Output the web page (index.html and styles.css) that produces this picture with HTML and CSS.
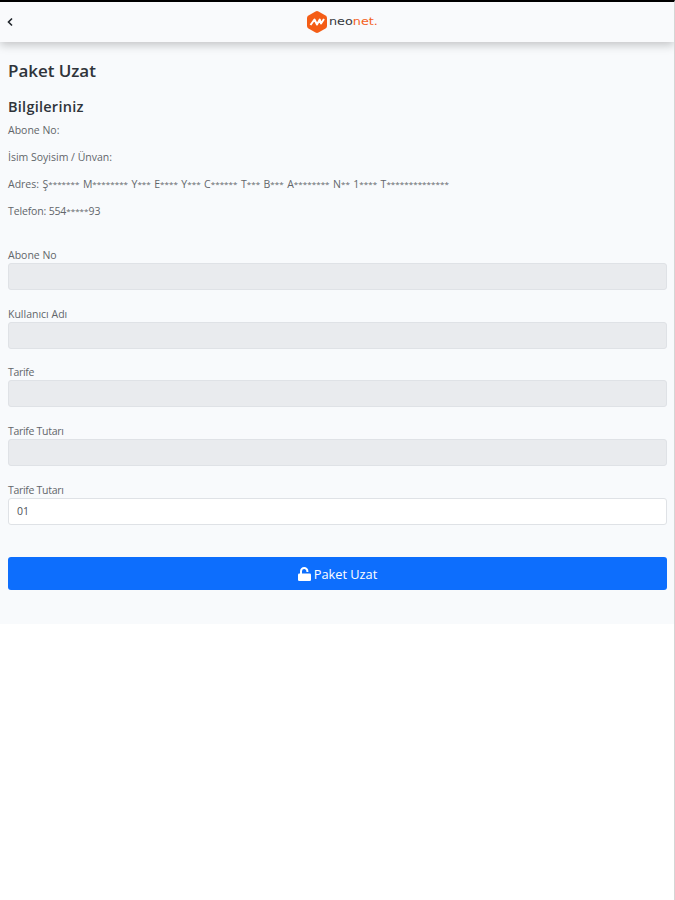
FILE: index.html
```html
<!DOCTYPE html>
<html lang="tr">
<head>
<meta charset="utf-8">
<title>Paket Uzat</title>
<link rel="stylesheet" href="styles.css">
</head>
<body>
<div class="page">
  <header class="topbar">
    <svg class="back" viewBox="0 0 6 10"><path d="M5 1.500 1.500 5 5 8.500"/></svg>
    <div class="brand">
      <svg class="hex" viewBox="0 0 20 22"><path class="hex-bg" d="M8.5.5q1.5-.8 3 0l7 4q1.5.9 1.5 2.6v7.8q0 1.700-1.500 2.600l-7 4q-1.500.8-3 0l-7-4Q0 16.600 0 14.900V7.100Q0 5.400 1.500 4.500z"/><path class="hex-mark" d="M3.500 14 7.500 8.500 10 13.500 12.800 8.500 14 12.500 17 8"/></svg>
      <span class="word">neo<b>net.</b></span>
    </div>
  </header>
  <main>
    <h1>Paket Uzat</h1>
    <h2>Bilgileriniz</h2>
    <p>Abone No:</p>
    <p>İsim Soyisim / Ünvan:</p>
    <p class="address">Adres: Ş<i>*******</i> M<i>********</i> Y<i>***</i> E<i>****</i> Y<i>***</i> C<i>******</i> T<i>***</i> B<i>***</i> A<i>********</i> N<i>**</i> 1<i>****</i> T<i>**************</i></p>
    <p class="phone">Telefon: 554<i>*****</i>93</p>
    <form>
      <div class="field"><label>Abone No</label><div class="control"></div></div>
      <div class="field"><label>Kullanıcı Adı</label><div class="control"></div></div>
      <div class="field"><label class="tight">Tarife</label><div class="control"></div></div>
      <div class="field"><label class="tight">Tarife Tutarı</label><div class="control"></div></div>
      <div class="field"><label class="tight">Tarife Tutarı</label><div class="control editable">01</div></div>
      <button type="button"><svg viewBox="0 0 13 14"><rect y="6.500" width="13" height="7.500" rx="1.300"/><path d="M3 7V4.200a3.200 3.200 0 0 1 6.400 0V5"/></svg><span>Paket Uzat</span></button>
    </form>
  </main>
</div>
</body>
</html>
```
FILE: styles.css
```css
* { box-sizing: border-box; }
html { background: #fff; }
body {
  margin: 0;
  min-height: 900px;
  border-top: 2px solid #000;
  border-right: 1px solid #d5d5d5;
  font-family: "Open Sans", "Noto Sans", sans-serif;
  font-size: 10.5px;
  color: #62666a;
}
.page { height: 622px; background: #f8fafc; }
.topbar {
  height: 40px;
  display: grid;
  grid-template-columns: 1fr auto 1fr;
  align-items: center;
  padding: 0 7px;
  background: #f9fafc;
  box-shadow: 0 3px 9px rgba(0, 0, 0, .22);
}
.back { width: 6px; height: 10px; fill: none; stroke: #20252b; stroke-width: 1.600; }
.brand { display: flex; align-items: center; gap: 2px; padding-left: 9px; }
.hex { width: 20px; height: 22px; }
.hex-bg { fill: #f45d16; }
.hex-mark { fill: none; stroke: #fff; stroke-width: 2; stroke-linejoin: round; }
.word {
  width: 47px;
  font: 400 10px/14px "DejaVu Sans", sans-serif;
  transform: scaleX(1.28);
  transform-origin: left;
  color: #34373b;
  white-space: nowrap;
}
.word b { font-weight: 400; color: #f4601c; }
main { padding: 17px 7px 0 8px; }
h1, h2 { margin: 0; color: #2f343a; font-weight: 600; white-space: nowrap; }
h1 { font-size: 17px; line-height: 24px; letter-spacing: -.05px; }
h2 { margin-top: 14px; font-size: 14.500px; line-height: 20px; letter-spacing: .25px; }
p { margin: 0 0 11px; height: 16px; line-height: 16px; white-space: nowrap; }
h2 + p { margin-top: 5px; }
p i { font-style: normal; font-size: 8px; line-height: 1; letter-spacing: .06px; vertical-align: 1px; }
.address { word-spacing: .7px; }
.phone { letter-spacing: -.15px; }
form { padding-top: 17px; }
.field { height: 58.700px; }
label { display: block; height: 16px; line-height: 16px; }
.tight { letter-spacing: -.3px; }
.control {
  height: 27px;
  border: 1px solid #dfe2e6;
  border-radius: 3px;
  background: #e9ebee;
  padding: 0 8px;
  line-height: 25px;
}
.editable { background: #fff; color: #4d5156; }
button {
  display: flex;
  align-items: center;
  justify-content: center;
  gap: 3px;
  width: 100%;
  height: 33px;
  margin-top: 17px;
  padding: 0;
  border: 0;
  border-radius: 3px;
  background: #0d6efd;
  color: #fff;
  font: 400 12.800px/20px "Open Sans", sans-serif;
}
button svg { width: 13px; height: 14px; fill: #fff; }
button path { fill: none; stroke: #fff; stroke-width: 2; }
```
